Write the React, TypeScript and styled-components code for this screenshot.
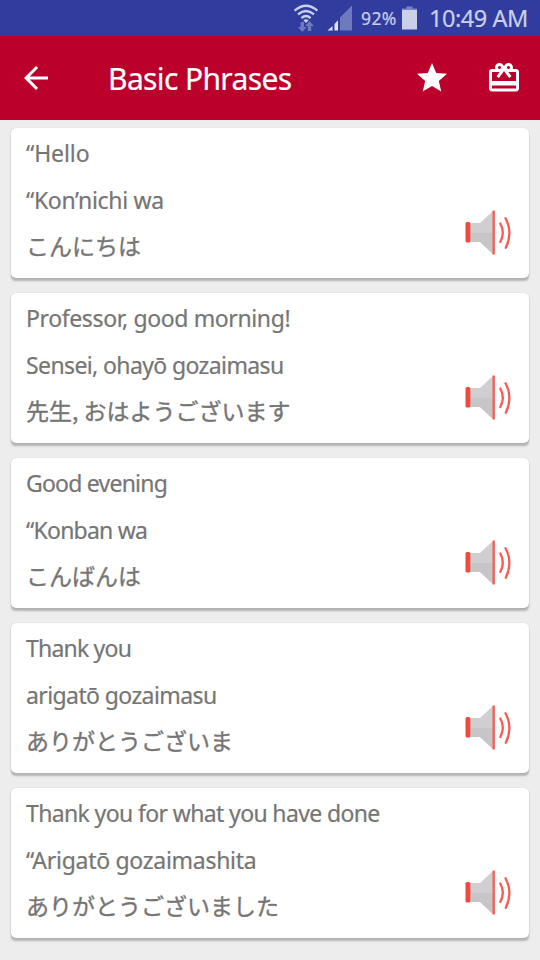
import React from 'react';
import styled, { createGlobalStyle } from 'styled-components';

const GlobalStyle = createGlobalStyle`
  * { box-sizing: border-box; }
  body { margin: 0; background: #ededed; overflow: hidden; }
`;

const Screen = styled.div`
  width: 540px;
  height: 960px;
  display: flex;
  flex-direction: column;
  background: #ededed;
  font-family: 'Noto Sans', 'Noto Sans CJK JP', sans-serif;
  overflow: hidden;
`;

const StatusBar = styled.div`
  height: 36px;
  flex: none;
  display: flex;
  align-items: center;
  justify-content: flex-end;
  padding-right: 12px;
  background: #303d9f;
  color: #cbcfe8;
  white-space: nowrap;
`;

const StatusIcon = styled.svg<{ $gap: number }>`
  flex: none;
  display: block;
  margin-right: ${p => p.$gap}px;
`;

const BatteryLevel = styled.span`
  width: 37px;
  margin-right: 4px;
  font-size: 17.5px;
  line-height: 36px;
  letter-spacing: 0.4px;
  -webkit-text-stroke: 0.2px currentColor;
`;

const Clock = styled.span`
  width: 99px;
  font-size: 23.5px;
  line-height: 36px;
  letter-spacing: -0.45px;
  -webkit-text-stroke: 0.2px currentColor;
`;

const AppBar = styled.header`
  height: 84px;
  flex: none;
  display: flex;
  align-items: center;
  padding: 0 18px;
  background: #ba002b;
  color: #fff;
`;

const IconButton = styled.button`
  width: 36px;
  height: 36px;
  padding: 0;
  border: 0;
  background: none;
  color: inherit;
  flex: none;
  svg { display: block; }
`;

const Title = styled.h1`
  flex: 1;
  margin: 0 0 0 54px;
  padding-top: 2px;
  font-size: 30px;
  font-weight: 400;
  line-height: 42px;
  letter-spacing: -0.62px;
  white-space: nowrap;
  -webkit-text-stroke: 0.2px currentColor;
`;

const Actions = styled.div`
  display: flex;
  gap: 36px;
`;

const List = styled.main`
  display: flex;
  flex-direction: column;
  gap: 15px;
  padding: 8px 11px 0;
`;

const Card = styled.article`
  height: 150px;
  flex: none;
  display: flex;
  justify-content: space-between;
  padding: 2px 15px 0;
  border-radius: 5px;
  background: #fff;
  box-shadow: 0 3px 2px -0.5px rgba(0, 0, 0, 0.24), 0 0 1px rgba(0, 0, 0, 0.22);
`;

const Lines = styled.div`
  display: flex;
  flex-direction: column;
`;

const Line = styled.p<{ $tracking?: number }>`
  height: 47px;
  margin: 0;
  font-size: 23px;
  line-height: 47px;
  letter-spacing: ${p => p.$tracking ?? 0}px;
  color: #757575;
  white-space: nowrap;
  -webkit-text-stroke: 0.2px currentColor;
`;

const Japanese = styled(Line)`
  font-family: 'Noto Sans CJK JP', sans-serif;
  line-height: 43px;
  -webkit-text-stroke: 0.35px currentColor;
`;

const SpeakButton = styled(IconButton)`
  width: 50px;
  height: 50px;
  margin-top: 78px;
`;

interface Phrase {
  english: string;
  romaji: string;
  japanese: string;
  tracking: [number, number];
}

const phrases: Phrase[] = [
  { english: '“Hello', romaji: '“Kon’nichi wa', japanese: 'こんにちは', tracking: [-0.1, -0.33] },
  { english: 'Professor, good morning!', romaji: 'Sensei, ohayō gozaimasu', japanese: '先生, おはようございます', tracking: [-0.38, -0.61] },
  { english: 'Good evening', romaji: '“Konban wa', japanese: 'こんばんは', tracking: [-0.78, -0.76] },
  { english: 'Thank you', romaji: 'arigatō gozaimasu', japanese: 'ありがとうございま', tracking: [-0.8, -0.6] },
  { english: 'Thank you for what you have done', romaji: '“Arigatō gozaimashita', japanese: 'ありがとうございました', tracking: [-0.63, -0.28] },
];

const Wifi = () => (
  <StatusIcon $gap={8} width="26" height="28" viewBox="0 0 26 28" fill="none" stroke="#cbcfe8" strokeWidth="2.3">
    <path d="M1.6 6.6Q13 -3.2 24.4 6.6M5 10.4Q13 3.6 21 10.4M8.4 14.1Q13 10 17.6 14.1" />
    <path d="M10.3 16.2Q13 14.2 15.7 16.2L13 18.9Z" fill="#cbcfe8" stroke="none" />
    <path d="M7.6 18h3.4v5h2.6l-4.3 5-4.3-5h2.6zM14.8 27h3.4v-5h2.6l-4.3-5-4.3 5h2.6z" fill="#6f79bd" stroke="none" />
  </StatusIcon>
);

const Signal = () => (
  <StatusIcon $gap={8} width="26" height="26" viewBox="0 0 26 26">
    <path d="M0.5 25.5L5.5 21V25.5ZM7.5 19L11 15.2V25.5H7.5Z" fill="#dfe2f3" />
    <path d="M13 12.5L25 0.5V25.5H13Z" fill="#6f79bd" />
  </StatusIcon>
);

const Battery = () => (
  <StatusIcon $gap={12} width="15" height="24" viewBox="0 0 15 24">
    <path d="M4.5 0.5h6v2H15V4H0V2.5h4.5z" fill="#7b84c3" />
    <path d="M0 4h15v19.5H0z" fill="#cbcfe8" />
  </StatusIcon>
);

const BackArrow = () => (
  <svg width="36" height="36" viewBox="0 0 24 24" fill="#fff">
    <path d="M20 11H7.83l5.59-5.59L12 4l-8 8 8 8 1.41-1.41L7.83 13H20v-2z" />
  </svg>
);

const Star = () => (
  <svg width="36" height="36" viewBox="0 0 24 24" fill="#fff">
    <path d="M12 17.27L18.18 21l-1.64-7.03L22 9.24l-7.19-.61L12 2 9.19 8.63 2 9.24l5.46 4.73L5.82 21z" />
  </svg>
);

const GiftCard = () => (
  <svg width="36" height="36" viewBox="0 0 24 24" fill="#fff">
    <path d="M20 6h-2.18c.11-.31.18-.65.18-1 0-1.66-1.34-3-3-3-1.05 0-1.96.54-2.5 1.35l-.5.67-.5-.68C10.96 2.54 10.05 2 9 2 7.34 2 6 3.34 6 5c0 .35.07.69.18 1H4c-1.11 0-1.99.89-1.99 2L2 19c0 1.11.89 2 2 2h16c1.11 0 2-.89 2-2V8c0-1.11-.89-2-2-2zm-5-2c.55 0 1 .45 1 1s-.45 1-1 1-1-.45-1-1 .45-1 1-1zM9 4c.55 0 1 .45 1 1s-.45 1-1 1-1-.45-1-1 .45-1 1-1zm11 15H4v-2h16v2zm0-5H4V8h5.08L7 10.83 8.62 12 11 8.76l1-1.36 1 1.36L15.38 12 17 10.83 14.92 8H20v6z" />
  </svg>
);

const Speaker = () => (
  <svg width="50" height="50" viewBox="0 0 50 50" fill="none">
    <path d="M5 15H16L29 3V46L16 34H5Z" fill="#cfcfcf" />
    <path d="M5 25H29V46L16 34H5Z" fill="#c6c6c6" />
    <rect x="1.5" y="14" width="4.8" height="20.5" rx="1.6" fill="#f8463c" />
    <path d="M29.7 2.5V46.5" stroke="#fb5a52" strokeWidth="2.3" />
    <path d="M36.3 15.5Q41.3 24.5 36.3 34" stroke="#fb5a52" strokeWidth="2.3" strokeLinecap="round" />
    <path d="M41.5 10.2Q49.2 24.5 41.8 39.8" stroke="#fb5a52" strokeWidth="2.3" strokeLinecap="round" />
  </svg>
);

export default function App() {
  return (
    <Screen>
      <GlobalStyle />
      <StatusBar>
        <Wifi />
        <Signal />
        <BatteryLevel>92%</BatteryLevel>
        <Battery />
        <Clock>10:49 AM</Clock>
      </StatusBar>
      <AppBar>
        <IconButton aria-label="Back"><BackArrow /></IconButton>
        <Title>Basic Phrases</Title>
        <Actions>
          <IconButton aria-label="Favourites"><Star /></IconButton>
          <IconButton aria-label="Gifts"><GiftCard /></IconButton>
        </Actions>
      </AppBar>
      <List>
        {phrases.map(p => (
          <Card key={p.english}>
            <Lines>
              <Line $tracking={p.tracking[0]}>{p.english}</Line>
              <Line $tracking={p.tracking[1]}>{p.romaji}</Line>
              <Japanese lang="ja">{p.japanese}</Japanese>
            </Lines>
            <SpeakButton aria-label="Play"><Speaker /></SpeakButton>
          </Card>
        ))}
      </List>
    </Screen>
  );
}
